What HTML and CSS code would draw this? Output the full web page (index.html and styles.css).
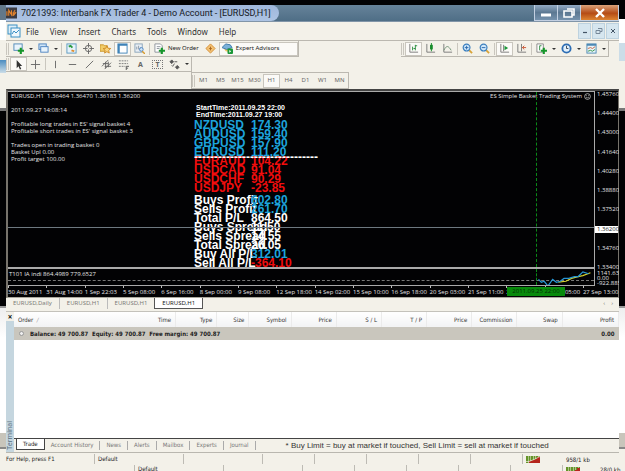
FILE: index.html
```html
<!DOCTYPE html>
<html lang="en">
<head>
<meta charset="utf-8">
<title>7021393: Interbank FX Trader 4 - Demo Account</title>
<link rel="stylesheet" href="styles.css">
</head>
<body>
<svg class="defs" aria-hidden="true">
  <symbol id="plus" viewBox="0 0 6 6"><path d="M2 0h2v2h2v2H4v2H2V4H0V2h2z" fill="#16962a"/></symbol>
  <symbol id="restore" viewBox="0 0 12 10"><path d="M4 1h7v6H9M1 3h8v6H1z" fill="none" stroke="currentColor" stroke-width="1.6"/></symbol>
</svg>
<div class="desktop">
  <aside class="edge edge-left" aria-hidden="true"><i class="e-title"></i><i class="e-light"></i><i class="e-dark"></i><i class="e-base"></i><i class="e-row"></i><i class="e-foot"></i></aside>

  <main class="window">
    <header class="titlebar">
      <div class="caption">
        <svg class="app" viewBox="0 0 12 12"><rect width="12" height="12" fill="#3b3b42"/><path d="M1 9V4M3 9V3l3 5V3M7 9c1 0 1-5 3-6M7 6h3M8 9l3-4" stroke="#e8862c" fill="none" stroke-width="1.2"/></svg>
        <h1>7021393: Interbank FX Trader 4 - Demo Account - [EURUSD,H1]</h1>
      </div>
      <div class="winbtns">
        <button class="wb" aria-label="Minimize"><svg viewBox="0 0 12 10"><path d="M1 7h10" stroke="#fff" stroke-width="3"/></svg></button>
        <button class="wb" aria-label="Restore"><svg viewBox="0 0 12 10"><use href="#restore"/></svg></button>
        <button class="wb close" aria-label="Close"><svg viewBox="0 0 12 10"><path d="M2 1l8 8M10 1L2 9" stroke="#fff" stroke-width="2.4"/></svg></button>
      </div>
    </header>

    <nav class="menubar">
      <svg class="doc" viewBox="0 0 14 14"><rect x="1" y="1" width="9" height="9" fill="#dceef8" stroke="#3a8fc4"/><rect x="4" y="4" width="9" height="9" fill="#eef7fc" stroke="#3a8fc4"/><path d="M5 10l2-3 2 2 3-3" fill="none" stroke="#3a8fc4"/></svg>
      <a href="#">File</a><a href="#">View</a><a href="#">Insert</a><a href="#">Charts</a><a href="#">Tools</a><a href="#">Window</a><a href="#">Help</a>
      <div class="mdi">
        <button aria-label="Minimize chart"><svg viewBox="0 0 8 8"><path d="M2 5.500h4" stroke="#456" stroke-width="1.200"/></svg></button>
        <button aria-label="Restore chart"><svg viewBox="0 0 8 8"><path d="M3 1.500h4v3H5M1 3.500h4v3H1z" fill="none" stroke="#789"/></svg></button>
        <button aria-label="Close chart"><svg viewBox="0 0 8 8"><path d="M2 2l4 4M6 2L2 6" stroke="#456"/></svg></button>
      </div>
    </nav>

    <div class="toolrow">
      <div class="toolbar">
        <i class="grip"></i>
        <button class="t" aria-label="New chart"><svg viewBox="0 0 12 12"><rect x="1" y="1" width="9" height="7" fill="#e9f3fb" stroke="#4d88b8"/><use href="#plus" x="5" y="5" width="7" height="7"/></svg></button><button class="c" aria-label="New chart list"></button>
        <button class="t" aria-label="Profiles"><svg viewBox="0 0 12 12"><rect x="1" y="1" width="8" height="6" fill="#cfe4f6" stroke="#4b82c0"/><rect x="3" y="4" width="8" height="6" fill="#e8f3fc" stroke="#4b82c0"/></svg></button><button class="c" aria-label="Profile list"></button>
        <i class="sep"></i>
        <button class="t" aria-label="Market Watch"><svg viewBox="0 0 12 12"><rect x="1" y="1" width="10" height="10" fill="#e6f2fa" stroke="#5b98c0"/><path d="M3 4l2-1 2 2" stroke="#2a9a3c" stroke-width="2" fill="none"/><path d="M6 8l3 1" stroke="#e08a28" stroke-width="2"/></svg></button>
        <button class="t" aria-label="Data Window"><svg viewBox="0 0 12 12"><circle cx="6" cy="6" r="3.500" fill="none" stroke="#666"/><path d="M6 0v5M6 7v5M0 6h5M7 6h5" stroke="#666"/></svg></button>
        <button class="t" aria-label="Navigator"><svg viewBox="0 0 12 12"><path d="M0 2h4l1 1h3v6H0z" fill="#f2cd69" stroke="#c99428"/><path d="M7.500 3l1.200 2.700 3 .3-2.200 2 .6 3-2.600-1.500L5 11l.6-3-2.200-2 3-.3z" fill="#fad47c" stroke="#cf8b25"/></svg></button>
        <button class="t on" aria-label="Terminal"><svg viewBox="0 0 12 12"><rect x="1" y="1" width="10" height="10" fill="#fff" stroke="#3e82b8"/><path d="M2 1v10M1 2h10" stroke="#3e82b8" stroke-width="2"/></svg></button>
        <button class="t" aria-label="Strategy Tester"><svg viewBox="0 0 12 12"><rect x="1" y="1" width="8" height="9" fill="#e9eff5" stroke="#8aa4ba"/><path d="M3 7V4M5 7V3M7 7V5" stroke="#8a97a4"/><circle cx="8" cy="7" r="2" fill="#cfe5f8" stroke="#4b82c0"/><path d="M9 9l3 3" stroke="#d69a2d" stroke-width="1.500"/></svg></button>
        <i class="sep"></i>
        <button class="wide"><svg viewBox="0 0 12 12"><path d="M1 1h6l2 2v7H1z" fill="#fff" stroke="#8b9299"/><path d="M3 4h4M3 6h3" stroke="#8b9299"/><use href="#plus" x="5" y="5" width="7" height="7"/></svg>New Order</button>
        <button class="t" aria-label="MetaEditor"><svg viewBox="0 0 12 12"><path d="M6 1l5 5-5 5-5-5z" fill="#f3c172" stroke="#d48c35"/><path d="M6 4v4M4.500 6h3" stroke="#a8641c"/></svg></button>
        <button class="wide on ea"><svg viewBox="0 0 12 12"><path d="M2 6h8l-1 4-5-1z" fill="#f0c562"/><path d="M0 5l4-4 5 1 2 3-6 2z" fill="#7bb2da" stroke="#3976a8"/><rect x="6" y="6" width="6" height="6" rx="1" fill="#1b9838"/><path d="M8 7.500v3l2-1.500z" fill="#fff"/></svg>Expert Advisors</button>
      </div>
      <div class="toolbar right">
        <i class="grip"></i>
        <button class="t on" aria-label="Bar chart"><svg viewBox="0 0 12 12"><path d="M2 1v9h9" fill="none" stroke="#777"/><path d="M5 8V4M8 8V2M8 3h2M6 6h2" stroke="#258a3a"/></svg></button>
        <button class="t" aria-label="Candlesticks"><svg viewBox="0 0 12 12"><path d="M2 1v9h9" fill="none" stroke="#777"/><path d="M7 0v9" stroke="#168c2a"/><path d="M7 2v5" stroke="#168c2a" stroke-width="3"/></svg></button>
        <button class="t" aria-label="Line chart"><svg viewBox="0 0 12 12"><path d="M2 1v9h9" fill="none" stroke="#777"/><path d="M2 8c3-6 5-5 8 0" fill="none" stroke="#6b8e72"/></svg></button>
        <i class="sep"></i>
        <button class="t" aria-label="Zoom in"><svg viewBox="0 0 12 12"><path d="M7 7l4 4" stroke="#d8a337" stroke-width="2"/><circle cx="5" cy="5" r="3.700" fill="#cde6fa" stroke="#3c7fbe" stroke-width="1.300"/><path d="M3 5h4M5 3v4" stroke="#2c69ac"/></svg></button>
        <button class="t" aria-label="Zoom out"><svg viewBox="0 0 12 12"><path d="M7 7l4 4" stroke="#d8a337" stroke-width="2"/><circle cx="5" cy="5" r="3.700" fill="#cde6fa" stroke="#3c7fbe" stroke-width="1.300"/><path d="M3 5h4" stroke="#2c69ac"/></svg></button>
        <i class="sep"></i>
        <button class="t on" aria-label="Auto scroll"><svg viewBox="0 0 12 12"><path d="M2 1v9h9M5 2v7" fill="none" stroke="#777"/><path d="M6 3l4 2.500L6 8z" fill="#1b9838"/></svg></button>
        <button class="t" aria-label="Chart shift"><svg viewBox="0 0 12 12"><path d="M2 1v9h9M6 1v8" fill="none" stroke="#777"/><path d="M11 5H7l2-2M7 5l2 2" stroke="#c8502c" fill="none"/></svg></button>
        <i class="sep"></i>
        <button class="t" aria-label="Indicators"><svg viewBox="0 0 12 12"><path d="M1 1h7v9H1z" fill="#fff" stroke="#888"/><path d="M6 3H4v5" stroke="#258a3a" fill="none"/><use href="#plus" x="5" y="5" width="7" height="7"/></svg></button><button class="c" aria-label="Indicator list"></button>
        <button class="t" aria-label="Periods"><svg viewBox="0 0 12 12"><circle cx="6" cy="6" r="4.500" fill="#e2f0fc" stroke="#2c6db4" stroke-width="2"/><path d="M6 3v3h2" fill="none" stroke="#345"/></svg></button><button class="c" aria-label="Period list"></button>
        <button class="t" aria-label="Templates"><svg viewBox="0 0 12 12"><rect x="1" y="1" width="10" height="10" fill="#e9f4fa" stroke="#4b88b4"/><path d="M1 2h10" stroke="#4b88b4" stroke-width="2"/><path d="M2 6l3-1 2 1 3-2" stroke="#c5633c" fill="none"/><path d="M2 9l3-1 2 1 3-2" stroke="#329346" fill="none"/></svg></button><button class="c" aria-label="Template list"></button>
      </div>
    </div>

    <div class="toolrow second">
      <div class="toolbar">
        <i class="grip"></i>
        <button class="t on" aria-label="Cursor"><svg viewBox="0 0 12 12"><path d="M4 1v9l2-2 1.500 3.500L9 11 7.500 7.500H10z" fill="#333"/></svg></button>
        <button class="t" aria-label="Crosshair"><svg viewBox="0 0 12 12"><path d="M6 1v10M1 6h10" stroke="#666"/></svg></button>
        <i class="sep"></i>
        <button class="t" aria-label="Vertical line"><svg viewBox="0 0 12 12"><path d="M6 2v8" stroke="#666"/></svg></button>
        <button class="t" aria-label="Horizontal line"><svg viewBox="0 0 12 12"><path d="M2 6h8" stroke="#666"/></svg></button>
        <button class="t" aria-label="Trendline"><svg viewBox="0 0 12 12"><path d="M2 10l8-8" stroke="#666"/></svg></button>
        <button class="t" aria-label="Channel"><svg viewBox="0 0 12 12"><path d="M1 8l7-7M4 11l7-7M2 5h6M4 8h7M5 3v7M8 3v6" stroke="#666"/></svg></button>
        <button class="t" aria-label="Fibonacci"><svg viewBox="0 0 12 12"><path d="M1 2h10M1 5h10M1 8h7" stroke="#777" stroke-dasharray="2 1"/><path d="M9 12V8h3M9 10h2" stroke="#555" fill="none"/></svg></button>
        <button class="t glyph" aria-label="Text">A</button>
        <button class="t glyph boxed" aria-label="Text label"><span>T</span></button>
        <button class="t" aria-label="Arrows"><svg viewBox="0 0 12 12"><path d="M3 1l2 2-2 2-2-2zM9 7l2 2-2 2-2-2z" fill="#555" stroke="#555"/><path d="M3 7l1 1 2-3M6 3h3" fill="none" stroke="#555"/></svg></button><button class="c" aria-label="Arrow list"></button>
      </div>
    </div>

    <div class="toolrow third">
      <div class="toolbar frames">
        <i class="grip"></i>
        <button>M1</button><button>M5</button><button>M15</button><button>M30</button><button class="on">H1</button><button>H4</button><button>D1</button><button>W1</button><button>MN</button>
      </div>
    </div>

    <section class="chart">
      <div class="plot">
        <div class="crossh"></div><div class="crossv"></div>
        <div class="info">
          <p>EURUSD,H1&nbsp; 1.36464 1.36470 1.36183 1.36200</p><p></p><p>2011.09.27 14:08:14</p><p></p>
          <p>Profitable long trades in ES' signal basket 4</p><p>Profitable short trades in ES' signal basket 3</p><p></p>
          <p>Trades open in trading basket 0</p><p>Basket Upl 0.00</p><p>Profit target 100.00</p>
        </div>
        <div class="results">
          <p class="time">StartTime:2011.09.25 22:00</p><p class="time">EndTime:2011.09.27 19:00</p>
          <dl class="up"><dt>NZDUSD</dt><dd>174.30</dd><dt>AUDUSD</dt><dd>159.40</dd><dt>GBPUSD</dt><dd>157.90</dd><dt>EURUSD</dt><dd>111.20</dd></dl>
          <div class="rule">-------------------------------</div>
          <dl class="down"><dt>EURAUD</dt><dd>104.22</dd><dt>USDCAD</dt><dd>91.04</dd><dt>USDCHF</dt><dd>90.29</dd><dt>USDJPY</dt><dd>-23.85</dd></dl>
          <dl class="totals"><dt>Buys Profit</dt><dd class="up">602.80</dd><dt>Sells Profit</dt><dd class="up">261.70</dd><dt>Total P/L</dt><dd>864.50</dd><dt>Buys Spread</dt><dd>11.50</dd><dt>Sells Spread</dt><dd>14.55</dd><dt>Total Spread</dt><dd>26.05</dd><dt>Buy All P/L</dt><dd class="up">312.01</dd><dt>Sell All P/L</dt><dd class="down">-364.10</dd></dl>
        </div>
        <p class="system">ES Simple Basket Trading System <svg viewBox="0 0 8 8"><circle cx="4" cy="4" r="3.300" fill="none" stroke="#ddd" stroke-width=".8"/><path d="M2.300 4.700q1.700 1.500 3.400 0M2.700 2.500v1M5.300 2.500v1" fill="none" stroke="#ddd" stroke-width=".7"/></svg></p>
      </div>
      <div class="prices"><span>1.45760</span><span>1.44400</span><span>1.43000</span><span>1.41640</span><span>1.40280</span><span>1.38880</span><span>1.37520</span><span class="now">1.36200</span><span>1.34760</span><span>1.33400</span></div>
      <div class="indicator">
        <p>T101 IA indi 864.4989 779.6527</p>
        <div class="zero"></div><div class="crossv"></div>
        <svg class="curve" viewBox="0 0 60 18"><path d="M24 14l8-1 6-3 7-2 5-1 8-3" fill="none" stroke="#d6d32c" stroke-width="1.300"/><path d="M3 11l3 3 3-1 4 5 5-7 4 3 4-1 4-3 5 0 6-2 4 0 5-5 6 2" fill="none" stroke="#2795d2" stroke-width="1.300"/></svg>
      </div>
      <div class="scale"><span>1141.635</span><span>0.00</span><span>-922.885</span></div>
      <div class="times"><span>30 Aug 2011</span><span>31 Aug 14:00</span><span>1 Sep 22:03</span><span>5 Sep 08:00</span><span>6 Sep 16:00</span><span>8 Sep 00:00</span><span>9 Sep 08:00</span><span>12 Sep 18:00</span><span>14 Sep 02:00</span><span>15 Sep 10:00</span><span>16 Sep 18:00</span><span>20 Sep 03:00</span><span>21 Sep 11:00</span><span>2</span><span>26 Sep 05:00</span><span>27 Sep 13:00</span><b>2011.09.25 22:00</b></div>
    </section>

    <nav class="charttabs"><a href="#">EURUSD,Daily</a><a href="#">EURUSD,H1</a><a href="#">EURUSD,H1</a><a href="#" class="active">EURUSD,H1</a><span class="arrows">‹</span><span class="arrows">›</span></nav>

    <section class="terminal">
      <div class="side"><button aria-label="Close terminal">×</button><span>Terminal</span></div>
      <div class="pane">
        <table>
          <colgroup><col class="w-order"><col class="w-45"><col class="w-41"><col class="w-32"><col class="w-42"><col class="w-45"><col class="w-45"><col class="w-45"><col class="w-45"><col class="w-45"><col class="w-45"><col class="w-56"></colgroup>
          <thead><tr><th class="l">Order <i>&nbsp;∕</i></th><th>Time</th><th>Type</th><th>Size</th><th>Symbol</th><th>Price</th><th>S / L</th><th>T / P</th><th>Price</th><th>Commission</th><th>Swap</th><th>Profit</th></tr></thead>
          <tbody><tr><td class="l" colspan="11"><i class="dot"></i>Balance: 49 700.87&nbsp; Equity: 49 700.87&nbsp; Free margin: 49 700.87</td><td>0.00</td></tr></tbody>
        </table>
        <nav class="termtabs"><a href="#" class="active">Trade</a><a href="#">Account History</a><a href="#">News</a><a href="#">Alerts</a><a href="#">Mailbox</a><a href="#">Experts</a><a href="#">Journal</a><p>* Buy Limit = buy at market if touched, Sell Limit = sell at market if touched</p></nav>
      </div>
    </section>

    <footer class="status"><span class="help">For Help, press F1</span><span class="prof">Default</span><span class="s79"></span><span class="s53"></span><span class="s53"></span><span class="s53"></span><span class="s53"></span><span class="s53"></span><span class="net"><svg viewBox="0 0 14 7"><path d="M0 3.500h14" stroke="#659429" stroke-width="7" stroke-dasharray="2 .5"/><path d="M3 7V5h3V4h3V3h2V1h3v6z" fill="#b5261c"/><path d="M0 5.500h3l5-2 6-3" stroke="#f2eddc" fill="none" stroke-width=".7"/></svg>958/1 kb</span></footer>
  </main>

  <aside class="edge edge-right" aria-hidden="true"><i class="e-black"></i><i class="e-white"></i><i class="e-blue"></i><i class="e-light"></i><i class="e-dark"></i><i class="e-base"></i><i class="e-row"></i><i class="e-foot"></i></aside>
</div>
<footer class="status behind"><span class="help"></span><span class="prof">Default</span><span class="s79"></span><span class="s53"></span><span class="s53"></span><span class="s53"></span><span class="s53"></span><span class="s53"></span><span class="net"><svg viewBox="0 0 14 7"><path d="M0 3.500h14" stroke="#659429" stroke-width="7" stroke-dasharray="2 .5"/><path d="M3 7V5h3V4h3V3h2V1h3v6z" fill="#b5261c"/></svg>28/0 kb</span></footer>
</body>
</html>
```

FILE: styles.css
```css
* { box-sizing: border-box; }
:root { --face: #f3f1e9; --line: #bbb8b0; --ui: "Noto Sans", "Open Sans", sans-serif; --small: "DejaVu Sans Condensed", "Noto Sans", sans-serif; }
body { margin: 0; min-height: 100vh; display: flex; flex-direction: column; background: var(--face); color: #333; font-family: var(--ui); font-size: 6px; line-height: 9px; overflow: hidden; }
p, h1, dl, dd { margin: 0; }
a { color: inherit; text-decoration: none; }
button { margin: 0; padding: 0; border: 0; background: none; color: inherit; font: inherit; display: flex; align-items: center; justify-content: center; }
svg { display: block; flex: none; }
.defs { position: absolute; width: 0; height: 0; }

.desktop { flex: 1; display: flex; min-height: 0; border-top: 5px solid #020204; }
.edge { width: 6px; flex: none; display: flex; flex-direction: column; overflow: hidden; }
.edge i { display: block; flex: none; }
.e-title { height: 15px; background: #62788a; }
.e-black { height: 14px; background: #020204; }
.e-white { height: 24px; background: #fff; }
.e-blue { height: 18px; background: #cbdde8; }
.edge-left .e-light { height: 88px; background: linear-gradient(#fff 20px, var(--face) 20px, var(--face) 40px, #4a8cc0 40px, #cbdde8 53px, var(--face) 53px); }
.edge-right .e-light { height: 47px; background: var(--face); }
.edge .e-dark { height: 200px; background: #020204; border-top: 3px solid #777; border-bottom: 2px solid #999; }
.edge .e-base { flex: 1; background: linear-gradient(#eee, #fff 30px); }
.e-row { height: 14px; background: #c8c5bb; }
.e-foot { height: 18px; background: var(--face); border-top: 2px solid #888; }

.window { flex: 1; min-width: 0; display: flex; flex-direction: column; background: var(--face); }
.titlebar { height: 17px; display: flex; justify-content: space-between; background: linear-gradient(#66839a, #4f6e86); border-bottom: 1px solid #8195a8; }
.caption { display: flex; align-items: center; gap: 4px; padding-right: 8px; background: linear-gradient(#9fb7dc, #adc4e4); border-radius: 0 8px 8px 0; }
.app { width: 11px; height: 12px; }
h1 { font-family: Roboto, sans-serif; font-size: 9px; font-weight: 400; line-height: 16px; color: #171a24; white-space: nowrap; }
.winbtns { display: flex; height: 16px; border: 1px solid #c3d0e2; border-top: 0; }
.wb { width: 23px; background: linear-gradient(#93aac4, #5c7892 50%, #7592ad); border-right: 1px solid #c3d0e2; color: #fff; }
.wb svg { width: 12px; height: 10px; }
.wb.close { width: 37px; border: 0; background: linear-gradient(#dba27a, #b54c16 55%, #dd8431); }

.menubar { height: 18px; display: flex; align-items: center; gap: 11px; padding-left: 1px; font-size: 8px; }
.doc { width: 14px; height: 14px; margin-right: -6px; }
.mdi { margin-left: auto; display: flex; gap: 1px; }
.mdi button { width: 13px; height: 16px; background: #d6e6ef; border: 1px solid #bdd2df; }
.mdi svg { width: 8px; height: 8px; }

.toolrow { display: flex; justify-content: space-between; height: 17px; border-top: 1px solid var(--line); padding-right: 10px; }
.toolrow.second { height: 15px; border: 0; }
.toolrow.third { height: 17px; border: 0; padding-left: 185px; }
.toolbar { display: flex; align-items: center; border-right: 1px solid var(--line); border-bottom: 1px solid var(--line); font-size: 6px; }
.grip { width: 3px; height: 12px; border: 1px solid #c9c6be; border-width: 0 1px; margin-right: 1px; flex: none; }
.toolbar button { height: 14px; }
.toolbar .t { width: 17px; }
.toolbar .t svg, .wide svg { width: 11px; height: 11px; }
.toolbar .c { width: 8px; }
.c::before { content: ""; border: 2px solid transparent; border-top-color: #333; border-bottom: 0; }
.sep { width: 1px; height: 12px; background: #c9c6be; margin: 0 1px; }
.toolbar .on { background: #fbfaf7; border: 1px solid #c9c6be; }
.wide { gap: 3px; white-space: nowrap; color: #222; }
.toolbar .wide { padding: 0 3px; }
.toolbar .ea { padding: 0 18px 0 2px; }
.toolbar .glyph { color: #666; font-weight: 700; font-size: 7px; }
.boxed span { border: 1px dotted #777; line-height: 7px; padding: 0 2px; }
.toolrow.third .frames { border-top: 1px solid var(--line); border-left: 1px solid var(--line); color: #666; }
.frames .grip { margin: 0; }
.frames button { width: 17px; }

.chart { display: grid; grid-template-columns: minmax(0, 1fr) 23px; grid-template-rows: 178px 17px 11px; background: #020204; border: 2px solid #77736c; border-top-color: #444; border-bottom: 1px solid #aaa89e; border-right-width: 1px; color: #e4e4e4; font-family: "Open Sans", sans-serif; line-height: 7px; white-space: nowrap; }
.plot, .indicator { position: relative; border: 1px solid #aaa; border-left: 0; overflow: hidden; }
.plot { border-bottom-width: 2px; display: grid; grid-template-columns: 186px minmax(0, 1fr) auto; }
.indicator { border-top: 0; }
.crossh { position: absolute; left: 0; right: 0; top: 77%; border-top: 1px solid #6d7880; }
.crossv { position: absolute; top: 0; bottom: 0; right: 57px; border-left: 1px dashed #0a8a18; }
.info { padding: 1px 3px; }
.info p { height: 7px; }
.system { display: flex; gap: 2px; padding: 1px 3px; height: 9px; align-items: center; }
.system svg { width: 7px; height: 7px; }
.results { font: bold 12px/9px "Liberation Sans", sans-serif; padding-top: 12px; color: #fff; }
.results .time { font-size: 7px; line-height: 7px; padding-left: 2px; }
.results dl { display: grid; grid-template-columns: 57px 1fr; }
.results dl.up { padding-top: 3px; }
.results .totals { padding-top: 3px; }
.up { color: #1da4dc; }
.down { color: #f20d0d; }
.rule { height: 0; line-height: 0; position: relative; }
.prices { display: flex; flex-direction: column; justify-content: space-between; margin-bottom: -2px; }
.prices span, .scale span { padding-left: 2px; }
.prices .now { background: #fff; color: #222; }
.indicator p { padding: 2px 1px; }
.zero { position: absolute; left: 0; right: 0; top: 11px; border-top: 1px dashed #777; }
.curve { position: absolute; right: 0; top: 0; width: 60px; height: 17px; }
.scale { display: flex; flex-direction: column; justify-content: flex-end; line-height: 5px; }
.times { grid-column: 1 / -1; position: relative; display: grid; grid-template-columns: repeat(16, 6.285%); line-height: 9px; }
.times span::before { content: ""; display: block; width: 1px; height: 2px; background: #bbb; }
.times b { position: absolute; top: 1px; right: 53px; width: 58px; background: #078a0b; color: #032b04; font-weight: 400; line-height: 9px; text-align: center; }

.charttabs { display: flex; height: 14px; line-height: 11px; color: #7c7c78; border-bottom: 1px solid #c4c2bb; }
.charttabs a { padding: 0 7px; border-right: 1px solid #bbb; height: 11px; }
.charttabs a:nth-child(3) { border: 0; }
.charttabs .active { color: #222; background: #fff; border: 1px solid #555; border-top: 0; }
.arrows { padding-right: 6px; }
.active + .arrows { margin-left: auto; }

.terminal { flex: 1; display: flex; min-height: 0; }
.side { width: 8px; display: flex; flex-direction: column; justify-content: space-between; background: #c5d6df; color: #587080; font-size: 8px; }
.side button { height: 9px; background: var(--face); color: #111; font-weight: 700; }
.side span { writing-mode: vertical-rl; transform: rotate(180deg); line-height: 8px; font-size: 7px; padding-top: 2px; }
.pane { flex: 1; min-width: 0; display: flex; flex-direction: column; background: #fff; font-family: var(--small); }
table { width: 100%; table-layout: fixed; border-collapse: collapse; }
.w-order { width: 116px; } .w-45 { width: 45px; } .w-41 { width: 41px; } .w-32 { width: 32px; } .w-42 { width: 42px; } .w-56 { width: 56px; }
th, td { padding: 0 4px; text-align: right; white-space: nowrap; }
th { height: 15px; font-weight: 400; background: linear-gradient(#fff, #f2f3f4); }
th + th { border-right: 1px solid #ebebeb; }
th i { color: #999; }
th.l, td.l { text-align: left; }
td { height: 13px; background: #c9c6bd; color: #222; font-weight: 700; }
.dot { display: inline-block; width: 5px; height: 5px; margin: 0 6px 0 1px; border: 1px solid #999; border-radius: 3px; background: #eee; }
.termtabs { margin-top: auto; display: flex; height: 14px; line-height: 12px; background: var(--face); border-top: 1px solid #444; color: #777; }
.termtabs a { padding: 0 6px; height: 9px; margin-top: 2px; line-height: 8px; border-right: 1px solid #aaa; }
.termtabs .active { margin: 0 0 0 2px; height: 11px; line-height: 10px; background: #fff; border: 1px solid #444; border-top: 0; color: #222; }
.termtabs p { padding-left: 30px; font: 8px/13px "Liberation Sans", sans-serif; color: #333; white-space: nowrap; }

.status { height: 13px; display: flex; flex: none; align-items: center; border-top: 1px solid #b9b7af; white-space: nowrap; color: #222; font-family: var(--small); }
.status span { height: 10px; border-right: 1px solid #bdbbb4; flex: none; }
.status .help { width: 89px; }
.status .prof { width: 89px; padding-left: 3px; }
.status .s79 { width: 79px; }
.status .s53 { width: 52px; }
.status .net { display: flex; align-items: center; gap: 26px; padding-left: 3px; border: 0; }
.net svg { width: 14px; height: 7px; }
.behind { height: 6px; overflow: hidden; align-items: flex-start; border: 0; margin-left: 40px; line-height: 8px; }
.behind .help { width: 95px; }
.behind .net { gap: 20px; }
```
